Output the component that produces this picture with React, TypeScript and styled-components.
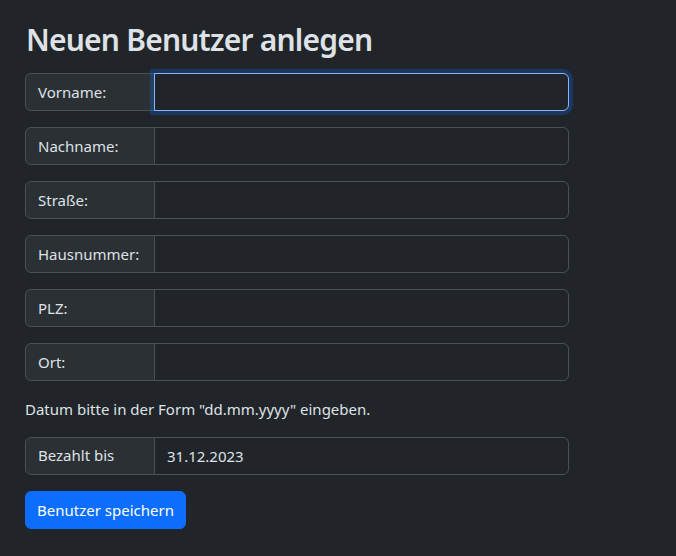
import * as React from 'react';
import styled, { createGlobalStyle } from 'styled-components';

const GlobalStyle = createGlobalStyle`
  html, body {
    margin: 0;
    padding: 0;
    background: #212529;
  }
  body {
    font-family: 'Noto Sans', 'Open Sans', sans-serif;
    font-size: 16px;
    line-height: 1.5;
    color: #dee2e6;
  }
  * {
    box-sizing: border-box;
  }
`;

const Page = styled.div`
  padding: 22px 25px 20px 25px;
  width: 594px;
`;

const Title = styled.h1`
  margin: 0 0 15px 1px;
  font-size: 30px;
  font-weight: 600;
  line-height: 36px;
  letter-spacing: -0.8px;
  color: #dee2e6;
`;

const Form = styled.form`
  display: flex;
  flex-direction: column;
`;

const Group = styled.div`
  display: flex;
  align-items: stretch;
  height: 38px;
  margin-bottom: 16px;
`;

const GroupLabel = styled.label`
  display: flex;
  align-items: center;
  width: 130px;
  flex-shrink: 0;
  padding: 0 12px;
  font-size: 15px;
  background: #2b3035;
  border: 1px solid #495057;
  border-radius: 6px 0 0 6px;
  color: #dee2e6;
`;

const Input = styled.input<{ $focus?: boolean }>`
  flex: 1;
  min-width: 0;
  margin-left: -1px;
  padding: 0 12px;
  font-family: inherit;
  font-size: 15px;
  color: #dee2e6;
  background: #212529;
  border: 1px solid ${(p) => (p.$focus ? '#86b7fe' : '#495057')};
  border-radius: 0 6px 6px 0;
  outline: none;
  position: relative;
  z-index: ${(p) => (p.$focus ? 2 : 0)};
  box-shadow: ${(p) => (p.$focus ? '0 0 0 4px rgba(13, 110, 253, 0.25)' : 'none')};
`;

const Hint = styled.p`
  margin: 1px 0 16px 0;
  font-size: 15px;
`;

const SaveButton = styled.button`
  align-self: flex-start;
  height: 38px;
  padding: 0 11px;
  font-family: inherit;
  font-size: 15px;
  color: #fff;
  background: #0d6efd;
  border: 1px solid #0d6efd;
  border-radius: 6px;
`;

const fields = ['Vorname:', 'Nachname:', 'Straße:', 'Hausnummer:', 'PLZ:', 'Ort:'];

const App: React.FC = () => {
  return (
    <>
      <GlobalStyle />
      <Page>
        <Title>Neuen Benutzer anlegen</Title>
        <Form onSubmit={(e) => e.preventDefault()}>
          {fields.map((f, i) => (
            <Group key={f}>
              <GroupLabel>{f}</GroupLabel>
              <Input type="text" $focus={i === 0} />
            </Group>
          ))}
          <Hint>Datum bitte in der Form "dd.mm.yyyy" eingeben.</Hint>
          <Group>
            <GroupLabel>Bezahlt bis</GroupLabel>
            <Input type="text" defaultValue="31.12.2023" />
          </Group>
          <SaveButton type="submit">Benutzer speichern</SaveButton>
        </Form>
      </Page>
    </>
  );
};

export default App;
